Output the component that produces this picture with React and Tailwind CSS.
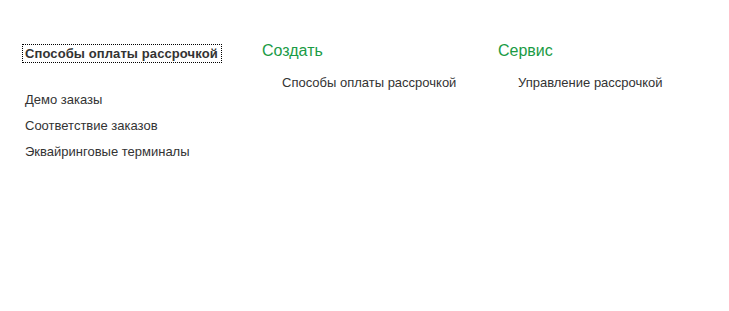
import React from 'react';

const App = () => {
  return (
    <div className="w-[729px] h-[311px] bg-white text-[13px] text-[#333] font-['Liberation_Sans',Arial,sans-serif] flex pt-[44px] pl-[22px]">
      <div className="w-[240px] flex flex-col">
        <div className="self-start border border-dotted border-black pl-[2px] pr-[3px] h-[19px] leading-[17px] font-bold tracking-[0.1px]">
          Способы оплаты рассрочкой
        </div>
        <div className="mt-[24px] flex flex-col pl-[3px]">
          <div className="h-[26px] leading-[26px]">Демо заказы</div>
          <div className="h-[26px] leading-[26px]">Соответствие заказов</div>
          <div className="h-[26px] leading-[26px]">Эквайринговые терминалы</div>
        </div>
      </div>
      <div className="w-[236px] flex flex-col">
        <div className="text-[16px] text-[#1a9b45] leading-[16px] mt-[-1px]">Создать</div>
        <div className="pl-[20px] mt-[14px]">Способы оплаты рассрочкой</div>
      </div>
      <div className="flex flex-col">
        <div className="text-[16px] text-[#1a9b45] leading-[16px] mt-[-1px]">Сервис</div>
        <div className="pl-[20px] mt-[14px]">Управление рассрочкой</div>
      </div>
    </div>
  );
};

export default App;
